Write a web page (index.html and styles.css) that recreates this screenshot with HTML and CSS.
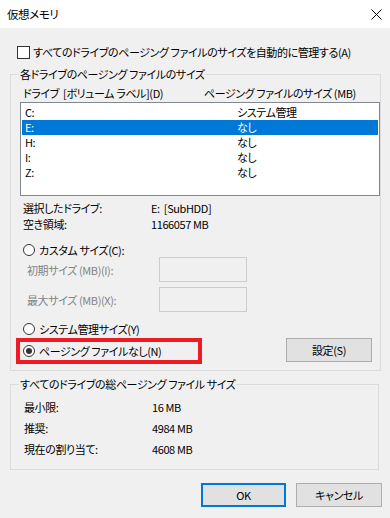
FILE: index.html
```html
<!DOCTYPE html>
<html lang="ja">
<head>
    <meta charset="UTF-8">
    <meta name="viewport" content="width=device-width, initial-scale=1.0">
    <title>仮想メモリ</title>
    <link rel="stylesheet" href="styles.css">
</head>
<body>
    <div class="titlebar">
        <span class="title">仮想メモリ</span>
        <svg class="close" width="11" height="11" viewBox="0 0 11 11">
            <path d="M0.5 0.5 L10.5 10.5 M10.5 0.5 L0.5 10.5" stroke="#000" stroke-width="1" fill="none"/>
        </svg>
    </div>

    <div class="dialog">
        <div class="auto-check">
            <span class="checkbox"></span>
            <span>すべてのドライブのページング ファイルのサイズを自動的に管理する(A)</span>
        </div>

        <fieldset class="group">
            <legend>各ドライブのページング ファイルのサイズ</legend>

            <div class="col-headers">
                <span class="col-drive">ドライブ  [ボリューム ラベル](D)</span>
                <span>ページング ファイルのサイズ (MB)</span>
            </div>

            <div class="listbox">
                <div class="row"><span class="drive">C:</span><span>システム管理</span></div>
                <div class="row selected"><span class="drive">E:</span><span>なし</span></div>
                <div class="row"><span class="drive">H:</span><span>なし</span></div>
                <div class="row"><span class="drive">I:</span><span>なし</span></div>
                <div class="row"><span class="drive">Z:</span><span>なし</span></div>
            </div>

            <div class="drive-info">
                <div class="info-row"><span class="info-label">選択したドライブ:</span><span class="info-value">E:  [SubHDD]</span></div>
                <div class="info-row"><span class="info-label">空き領域:</span><span class="info-value">1166057 MB</span></div>
            </div>

            <div class="radio-row custom">
                <span class="radio"></span>
                <span>カスタム サイズ(C):</span>
            </div>

            <div class="size-row first">
                <span class="size-label">初期サイズ (MB)(I):</span>
                <span class="size-input"></span>
            </div>
            <div class="size-row">
                <span class="size-label">最大サイズ (MB)(X):</span>
                <span class="size-input"></span>
            </div>

            <div class="radio-row system">
                <span class="radio"></span>
                <span>システム管理サイズ(Y)</span>
            </div>

            <div class="bottom-row">
                <div class="highlight">
                    <span class="radio checked"></span>
                    <span>ページング ファイルなし(N)</span>
                </div>
                <button class="btn set-btn">設定(S)</button>
            </div>
        </fieldset>

        <fieldset class="group totals">
            <legend>すべてのドライブの総ページング ファイル サイズ</legend>
            <div class="total-row"><span class="info-label">最小限:</span><span>16 MB</span></div>
            <div class="total-row"><span class="info-label">推奨:</span><span>4984 MB</span></div>
            <div class="total-row"><span class="info-label">現在の割り当て:</span><span>4608 MB</span></div>
        </fieldset>

        <div class="buttons">
            <button class="btn ok-btn">OK</button>
            <button class="btn">キャンセル</button>
        </div>
    </div>
</body>
</html>
```

FILE: styles.css
```css
body {
    margin: 0;
    width: 390px;
    height: 518px;
    overflow: hidden;
    background-color: #f0f0f0;
    color: #000;
    font-family: "Noto Sans CJK JP", "Noto Sans", sans-serif;
    font-size: 11px;
    line-height: 14px;
    letter-spacing: -0.4px;
    font-feature-settings: "palt" 1;
    white-space: nowrap;
}
.titlebar {
    height: 28px;
    background: #fff;
    display: flex;
    align-items: center;
    justify-content: space-between;
    padding: 0 8px 0 7px;
}
.title {
    font-size: 11.5px;
}
.close {
    display: block;
}
.dialog {
    padding: 0 10px;
}
.auto-check {
    margin-top: 17px;
    height: 14px;
    display: flex;
    align-items: center;
    padding-left: 7px;
}
.checkbox {
    width: 13px;
    height: 13px;
    box-sizing: border-box;
    border: 1px solid #333;
    background: #fff;
    margin-right: 3px;
}
.group {
    width: 369px;
    box-sizing: border-box;
    margin: 8px 0 0 0;
    padding: 0 0 6px 9px;
    border: 1px solid #dcdcdc;
}
.group legend {
    padding: 0 1px;
    margin-left: -1px;
    line-height: 14px;
}
.col-headers {
    display: flex;
    margin-top: 5px;
    padding-left: 3px;
    white-space: pre;
}
.col-drive {
    width: 181px;
}
.listbox {
    margin-top: 2px;
    width: 360px;
    height: 94px;
    box-sizing: border-box;
    border: 1px solid #828790;
    background: #fff;
    padding-top: 2px;
}
.row {
    display: flex;
    height: 15px;
    line-height: 15px;
    margin: 0 1px 0 1px;
    padding-left: 3px;
}
.row.selected {
    background: #0078d7;
    color: #fff;
}
.drive {
    width: 212px;
}
.drive-info {
    margin-top: 4px;
    padding-left: 3px;
}
.info-row {
    display: flex;
    line-height: 16px;
    white-space: pre;
}
.info-label {
    width: 128px;
}
.radio-row {
    display: flex;
    align-items: center;
    height: 14px;
    padding-left: 3px;
}
.radio-row.custom {
    margin-top: 11px;
}
.radio-row.system {
    margin-top: 10px;
}
.radio {
    width: 12px;
    height: 12px;
    box-sizing: border-box;
    border: 1px solid #333;
    border-radius: 50%;
    background: #fff;
    margin-right: 4px;
    position: relative;
}
.radio.checked::after {
    content: "";
    position: absolute;
    left: 2px;
    top: 2px;
    width: 6px;
    height: 6px;
    border-radius: 50%;
    background: #333;
}
.size-row {
    display: flex;
    align-items: center;
    margin-top: 5px;
    padding-left: 7px;
    color: #838383;
}
.size-row.first {
    margin-top: 0;
}
.size-label {
    width: 132px;
}
.size-input {
    width: 88px;
    height: 25px;
    box-sizing: border-box;
    border: 1px solid #cccccc;
}
.bottom-row {
    display: flex;
    justify-content: space-between;
    align-items: flex-start;
    margin-top: 2px;
}
.highlight {
    display: flex;
    align-items: center;
    width: 186px;
    height: 26px;
    box-sizing: border-box;
    border: 4px solid #ed1c24;
    margin-left: -4px;
    padding-left: 3px;
}
.btn {
    font: inherit;
    letter-spacing: inherit;
    font-feature-settings: "palt" 1;
    color: #000;
    width: 86px;
    height: 24px;
    box-sizing: border-box;
    padding: 0;
    border: 1px solid #adadad;
    background: #e1e1e1;
}
.set-btn {
    margin-right: 8px;
}
.totals {
    margin-top: 6px;
    padding-top: 6px;
    padding-bottom: 9px;
}
.total-row {
    display: flex;
    height: 21px;
    line-height: 21px;
    padding-left: 4px;
}
.buttons {
    display: flex;
    justify-content: flex-end;
    gap: 10px;
    margin-top: 13px;
    margin-right: -2px;
}
.ok-btn {
    width: 85px;
    border: 2px solid #0078d7;
}
```
